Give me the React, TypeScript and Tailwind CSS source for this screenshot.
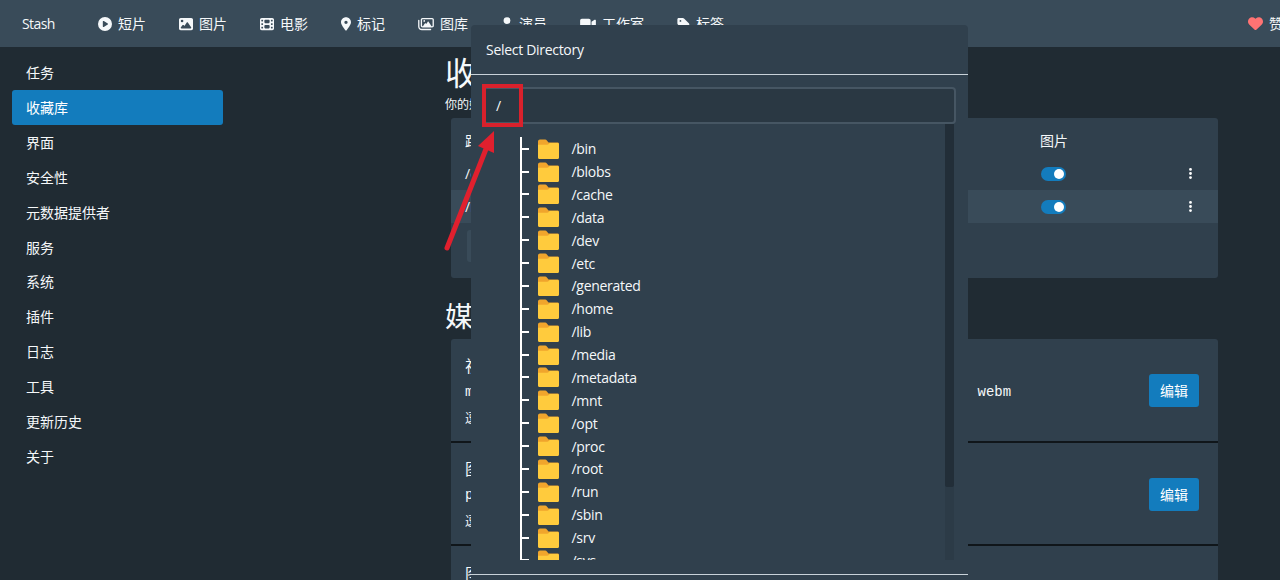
import React from 'react';
import {
  FaCirclePlay,
  FaEllipsisVertical,
  FaFilm,
  FaHeart,
  FaImage,
  FaLocationDot,
  FaRegImages,
  FaTag,
  FaUser,
  FaVideo,
} from 'react-icons/fa6';

const navItems = [
  { label: '短片', icon: <FaCirclePlay className="w-[14px]" /> },
  { label: '图片', icon: <FaImage className="w-[14px]" /> },
  { label: '电影', icon: <FaFilm className="w-[14px]" /> },
  { label: '标记', icon: <FaLocationDot className="w-[10px]" /> },
  { label: '图库', icon: <FaRegImages className="w-[16px]" /> },
  { label: '演员', icon: <FaUser className="w-[12px]" /> },
  { label: '工作室', icon: <FaVideo className="w-[16px]" /> },
  { label: '标签', icon: <FaTag className="w-[13px]" /> },
];

const sideItems = ['任务', '收藏库', '界面', '安全性', '元数据提供者', '服务', '系统', '插件', '日志', '工具', '更新历史', '关于'];

const dirs = ['bin', 'blobs', 'cache', 'data', 'dev', 'etc', 'generated', 'home', 'lib', 'media', 'metadata', 'mnt', 'opt', 'proc', 'root', 'run', 'sbin', 'srv', 'sys'];

const Folder = () => (
  <svg width="21" height="20" viewBox="0 0 22 20" preserveAspectRatio="none" className="shrink-0">
    <path d="M0 2.5C0 1.2 1 .5 2 .5h5.5c.8 0 1.3.4 1.800 1L11 3.5h9.5c.9 0 1.5.6 1.5 1.5v3H0z" fill="#f0a52c" />
    <path d="M0 5.800h9.5c.8 0 1.300-.3 1.800-.8l1-.9h8.200c.9 0 1.500.6 1.500 1.500v12.900c0 .9-.6 1.500-1.500 1.500H1.500C.6 20 0 19.400 0 18.500z" fill="#ffcb3d" />
  </svg>
);

const Toggle = () => (
  <div className="flex h-[14px] w-[25px] items-center justify-end rounded-full bg-[#137cbd] pr-[2px]">
    <div className="h-[10px] w-[10px] rounded-full bg-white" />
  </div>
);

const LibraryRow = ({ path, active }: { path: string; active?: boolean }) => (
  <div className={`flex h-[33px] items-center pl-[14px] pr-[21px] ${active ? 'bg-[#394b59]' : ''}`}>
    <span className="flex-1">{path}</span>
    <div className="w-[143px]">
      <Toggle />
    </div>
    <FaEllipsisVertical className="text-[13px] text-white" />
  </div>
);

const ExtensionRow = ({ title, value, hint }: { title: string; value: string; hint: string }) => (
  <div className="flex h-[103.5px] items-center justify-between border-b-2 border-[#10161a] pl-[14px] pr-[19px] pt-[2px] last:border-b-0">
    <div>
      <div className="text-[16px] leading-[24px]">{title}</div>
      <div className="mt-[4px] font-['Liberation_Mono',monospace] text-[14px] leading-[21px]">{value}</div>
      <div className="mt-[7px] text-[12px] leading-[18px]">{hint}</div>
    </div>
    <button className="flex h-[33px] w-[50px] items-center justify-center rounded-[3px] bg-[#137cbd] text-[14px] text-white">编辑</button>
  </div>
);

export default function App() {
  return (
    <div className="relative h-[580px] w-[1280px] overflow-hidden bg-[#202b33] font-['Open_Sans','Noto_Sans_CJK_SC',sans-serif] text-[14px] text-[#f5f8fa]">
      <nav className="flex h-[47px] items-center bg-[#394b59]">
        <span className="ml-[22px] w-[59px] tracking-[-0.6px]">Stash</span>
        {navItems.map((item) => (
          <div key={item.label} className="flex items-center gap-[6px] pl-[17px] pr-[16px]">
            <span className="text-[14px]">{item.icon}</span>
            <span>{item.label}</span>
          </div>
        ))}
        <div className="ml-auto flex items-center gap-[6px] whitespace-nowrap">
          <FaHeart className="text-[15px] text-[#ff7373]" />
          <span className="w-[11px] overflow-hidden">赞助</span>
        </div>
      </nav>

      <div className="flex">
        <aside className="ml-[12px] w-[211px] shrink-0 pt-[8.5px]">
          {sideItems.map((item) => (
            <div
              key={item}
              className={`flex h-[34.85px] items-center rounded-[3px] px-[14px] ${item === '收藏库' ? 'bg-[#137cbd] text-white' : ''}`}
            >
              {item}
            </div>
          ))}
        </aside>

        <main className="ml-[222px] w-[773px] pt-[6px]">
          <h2 className="text-[32px] leading-[40px]">收藏库</h2>
          <p className="mt-[2px] text-[12px] leading-[20px]">你的媒体库目录</p>
          <section className="ml-[6px] mt-[3px] h-[160px] rounded-[3px] bg-[#30404d]">
            <div className="flex h-[39px] items-end pb-[6px] pl-[14px]">
              <span className="flex-1 text-[14px]">路径</span>
              <span className="w-[178px]">图片</span>
            </div>
            <LibraryRow path="/data" />
            <LibraryRow path="/media" active />
            <button className="ml-[16px] mt-[7px] flex h-[32px] w-[90px] items-center justify-center rounded-[3px] bg-[#394b59]">添加目录</button>
          </section>
          <h2 className="mt-[17px] text-[28px] leading-[42px]">媒体内容扩展名</h2>
          <section className="ml-[6px] mt-[2px] rounded-[3px] bg-[#30404d]">
            <ExtensionRow title="视频扩展名" value="m4v, mp4, mov, wmv, avi, mpg, mpeg, rmvb, rm, flv, asf, mkv, webm" hint="逗号分隔的文件扩展名" />
            <ExtensionRow title="图片扩展名" value="png, jpg, jpeg, gif, webp" hint="逗号分隔的文件扩展名" />
            <ExtensionRow title="图库扩展名" value="zip, cbz" hint="逗号分隔的文件扩展名" />
          </section>
        </main>
      </div>

      {/* directory picker dialog */}
      <div className="absolute left-[471px] top-[25px] flex h-[570px] w-[497px] flex-col rounded-[4px] bg-[#30404d] tracking-[-0.3px]">
        <div className="flex h-[50px] shrink-0 items-center border-b border-[#c8d2d9] px-[15px]">Select Directory</div>
        <div className="mx-[12px] mt-[12px] flex h-[37px] shrink-0 items-center rounded-[4px] border-2 border-[#465663] bg-[#2a3843] pl-[11px]">/</div>
        <div className="relative ml-[38px] mr-[14px] h-[436px] shrink-0 overflow-hidden pt-[13.25px]">
          <div className="ml-[11px] border-l-[2.5px] border-white">
            {dirs.map((d) => (
              <div key={d} className="flex h-[22.875px] items-center">
                <div className="h-[2px] w-[7px] bg-white" />
                <div className="ml-[8.5px] flex items-center">
                  <Folder />
                </div>
                <span className="ml-[13px]">/{d}</span>
              </div>
            ))}
          </div>
          <div className="absolute bottom-0 right-0 top-0 w-[9px] bg-[#2c3b47]">
            <div className="h-[363px] rounded-b-[2px] bg-[#222e38]" />
          </div>
        </div>
        <div className="mt-[14px] h-[1px] shrink-0 bg-[#c8d2d9]" />
      </div>

      {/* red annotation over the path input */}
      <div className="absolute left-[482px] top-[84px] h-[43px] w-[41px] border-[4px] border-[#d9212c]" />
      <svg className="absolute left-[440px] top-[125px]" width="60" height="130" viewBox="0 0 60 130">
        <path d="M7 123 L46 24" stroke="#e0202e" strokeWidth="5" strokeLinecap="round" fill="none" />
        <path d="M54 6 L54 28 L38 21z" fill="#e0202e" />
      </svg>
    </div>
  );
}
